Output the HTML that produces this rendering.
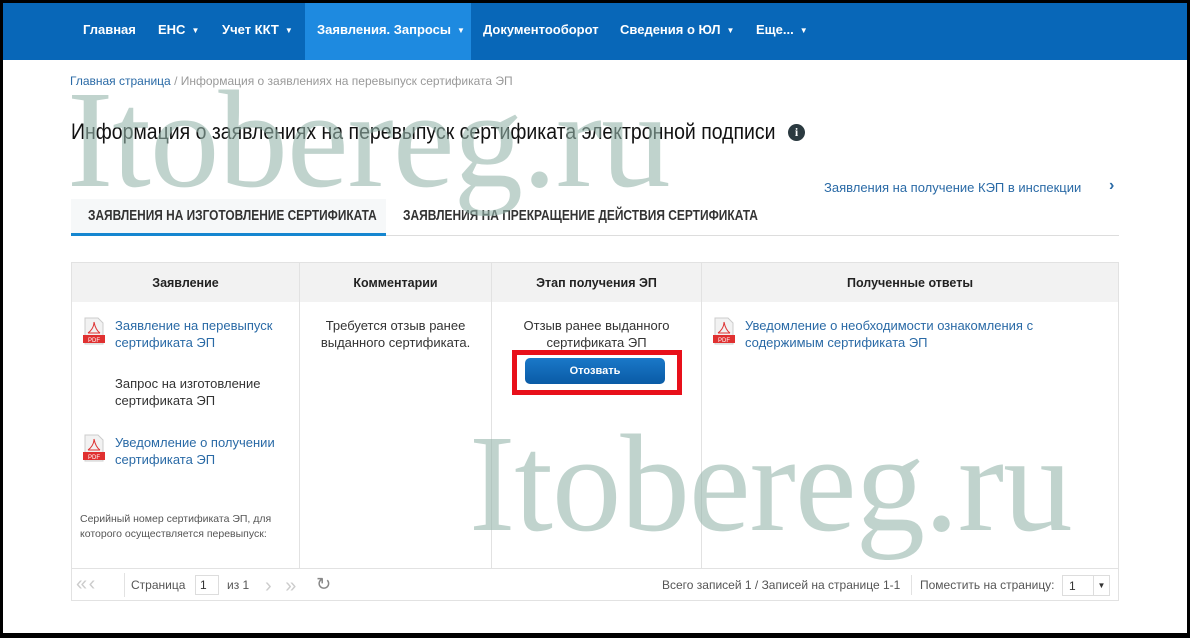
<!DOCTYPE html>
<html><head><meta charset="utf-8"><style>
*{box-sizing:border-box;margin:0;padding:0}
body{width:1190px;height:638px;background:#000;font-family:"Liberation Sans","DejaVu Sans",sans-serif;position:relative;overflow:hidden}
.page{position:absolute;left:3px;top:3px;width:1184px;height:630px;background:#fff;overflow:hidden}
.nav{position:absolute;left:0;top:0;width:1184px;height:57px;background:#0867b8}
.nav span{position:absolute;top:0;height:57px;line-height:53px;color:#fff;font-size:13px;font-weight:bold}
.nav .act{background:#1e8ae0}
.car{font-size:8px;margin-left:6px;vertical-align:1px}
.abs{position:absolute}
.wm{position:absolute;font-family:"Liberation Serif",serif;font-size:139px;color:rgba(150,182,172,0.6);line-height:1;z-index:5;pointer-events:none;letter-spacing:-1px}
.pdf{position:absolute;width:22px;height:28px}
.cellline{position:absolute;top:260px;width:1px;height:305px;background:#e2e2e2}
.hd{position:absolute;top:273px;font-size:12.5px;font-weight:bold;color:#222;text-align:center}
.txt{font-size:13px;line-height:17px;color:#333}
.txt.link,.link{color:#2a6aa6}
.sq{transform-origin:0 0;white-space:nowrap}
</style></head><body><div class="page">
<div class="nav">
<span style="left:80px">Главная</span>
<span style="left:155px">ЕНС<i class="car">▼</i></span>
<span style="left:219px">Учет ККТ<i class="car">▼</i></span>
<span class="act" style="left:302px;width:166px;padding-left:12px">Заявления. Запросы<i class="car">▼</i></span>
<span style="left:480px">Документооборот</span>
<span style="left:617px">Сведения о ЮЛ<i class="car">▼</i></span>
<span style="left:753px">Еще...<i class="car">▼</i></span>
</div>
<div class="abs" style="left:67px;top:71px;font-size:12px;color:#999"><span class="link">Главная страница</span> / Информация о заявлениях на перевыпуск сертификата ЭП</div>
<div class="abs sq" style="left:68px;top:116px;font-size:22px;color:#111;transform:scaleX(0.885)">Информация о заявлениях на перевыпуск сертификата электронной подписи</div>
<div class="abs" style="left:785px;top:121px;width:17px;height:17px;border-radius:50%;background:#2b3a40;color:#fff;font-size:12px;font-weight:bold;text-align:center;line-height:17px;font-family:'Liberation Serif',serif">i</div>
<div class="abs" style="left:821px;top:177px;font-size:13px;color:#2a6aa6">Заявления на получение КЭП в инспекции</div>
<div class="abs" style="left:1106px;top:174px;font-size:16px;color:#2a6aa6;font-weight:bold">›</div>
<div class="abs" style="left:68px;top:196px;width:315px;height:35px;background:#f6f8f9"></div>
<div class="abs sq" style="left:85px;top:205px;font-size:14.5px;font-weight:bold;color:#333;transform:scaleX(0.82)">ЗАЯВЛЕНИЯ НА ИЗГОТОВЛЕНИЕ СЕРТИФИКАТА</div>
<div class="abs sq" style="left:400px;top:205px;font-size:14.5px;font-weight:bold;color:#333;transform:scaleX(0.825)">ЗАЯВЛЕНИЯ НА ПРЕКРАЩЕНИЕ ДЕЙСТВИЯ СЕРТИФИКАТА</div>
<div class="abs" style="left:68px;top:232px;width:1048px;height:1px;background:#ddd"></div>
<div class="abs" style="left:68px;top:230px;width:315px;height:3px;background:#1586d0"></div>

<div class="abs" style="left:68px;top:259px;width:1048px;height:339px;border:1px solid #e2e2e2"></div>
<div class="abs" style="left:69px;top:260px;width:1046px;height:39px;background:#f2f2f2"></div>
<div class="cellline" style="left:296px"></div>
<div class="cellline" style="left:488px"></div>
<div class="cellline" style="left:698px"></div>
<div class="abs" style="left:69px;top:565px;width:1046px;height:1px;background:#e2e2e2"></div>
<div class="hd" style="left:69px;width:227px">Заявление</div>
<div class="hd" style="left:297px;width:191px">Комментарии</div>
<div class="hd" style="left:489px;width:209px">Этап получения ЭП</div>
<div class="hd" style="left:699px;width:416px">Полученные ответы</div>

<svg class="pdf" style="left:80px;top:314px" viewBox="0 0 22 28"><path d="M2 1h13l5 5v21H2z" fill="#f2f2f2" stroke="#ccc"/><path d="M11 5c0 5-3 9-6 11M11 5c1 5 3 9 6 11M5 16h12" stroke="#d33" fill="none"/><rect x="0" y="18" width="22" height="8" fill="#e03030"/><text x="11" y="25" font-size="6" fill="#fff" text-anchor="middle" font-family="Liberation Sans">PDF</text></svg>
<div class="abs txt link" style="left:112px;top:314px">Заявление на перевыпуск<br>сертификата ЭП</div>
<div class="abs txt" style="left:112px;top:372px">Запрос на изготовление<br>сертификата ЭП</div>
<svg class="pdf" style="left:80px;top:431px" viewBox="0 0 22 28"><path d="M2 1h13l5 5v21H2z" fill="#f2f2f2" stroke="#ccc"/><path d="M11 5c0 5-3 9-6 11M11 5c1 5 3 9 6 11M5 16h12" stroke="#d33" fill="none"/><rect x="0" y="18" width="22" height="8" fill="#e03030"/><text x="11" y="25" font-size="6" fill="#fff" text-anchor="middle" font-family="Liberation Sans">PDF</text></svg>
<div class="abs txt link" style="left:112px;top:431px">Уведомление о получении<br>сертификата ЭП</div>
<div class="abs" style="left:77px;top:509px;font-size:10.5px;line-height:15px;color:#555">Серийный номер сертификата ЭП, для<br>которого осуществляется перевыпуск:</div>
<div class="abs txt" style="left:297px;top:314px;width:191px;text-align:center">Требуется отзыв ранее<br>выданного сертификата.</div>
<div class="abs txt" style="left:489px;top:314px;width:209px;text-align:center">Отзыв ранее выданного<br>сертификата ЭП</div>
<div class="abs" style="left:509px;top:347px;width:170px;height:45px;border:5px solid #e8101a"></div>
<div class="abs" style="left:522px;top:355px;width:140px;height:26px;border-radius:5px;background:linear-gradient(#1a78c8,#0a5ba6);color:#fff;font-size:11px;font-weight:bold;text-align:center;line-height:26px">Отозвать</div>
<svg class="pdf" style="left:710px;top:314px" viewBox="0 0 22 28"><path d="M2 1h13l5 5v21H2z" fill="#f2f2f2" stroke="#ccc"/><path d="M11 5c0 5-3 9-6 11M11 5c1 5 3 9 6 11M5 16h12" stroke="#d33" fill="none"/><rect x="0" y="18" width="22" height="8" fill="#e03030"/><text x="11" y="25" font-size="6" fill="#fff" text-anchor="middle" font-family="Liberation Sans">PDF</text></svg>
<div class="abs txt link" style="left:742px;top:314px">Уведомление о необходимости ознакомления с<br>содержимым сертификата ЭП</div>

<div class="abs" style="left:73px;top:570px;font-size:20px;color:#ccc;letter-spacing:-2px">«&nbsp;‹</div>
<div class="abs" style="left:121px;top:570px;width:1px;height:24px;background:#e2e2e2"></div>
<div class="abs" style="left:128px;top:575px;font-size:12px;color:#555">Страница</div>
<div class="abs" style="left:192px;top:572px;width:24px;height:20px;border:1px solid #ddd;font-size:12px;padding:2px 4px;color:#333">1</div>
<div class="abs" style="left:224px;top:575px;font-size:12px;color:#555">из 1</div>
<div class="abs" style="left:262px;top:572px;font-size:20px;color:#ccc;letter-spacing:4px">›&nbsp;»</div>
<div class="abs" style="left:313px;top:571px;font-size:18px;color:#888">↻</div>
<div class="abs" style="left:659px;top:575px;font-size:12px;color:#555">Всего записей 1 / Записей на странице 1-1</div>
<div class="abs" style="left:908px;top:572px;width:1px;height:20px;background:#e2e2e2"></div>
<div class="abs" style="left:917px;top:575px;font-size:12px;color:#555">Поместить на страницу:</div>
<div class="abs" style="left:1059px;top:572px;width:48px;height:21px;border:1px solid #ddd;font-size:12px;padding:3px 6px;color:#333">1<span style="position:absolute;right:0;top:0;width:16px;height:19px;border-left:1px solid #ddd;font-size:8px;text-align:center;line-height:19px">▼</span></div>

<div class="wm" style="left:64px;top:68px">Itobereg.ru</div>
<div class="wm" style="left:466px;top:412px">Itobereg.ru</div>
</div></body></html>
